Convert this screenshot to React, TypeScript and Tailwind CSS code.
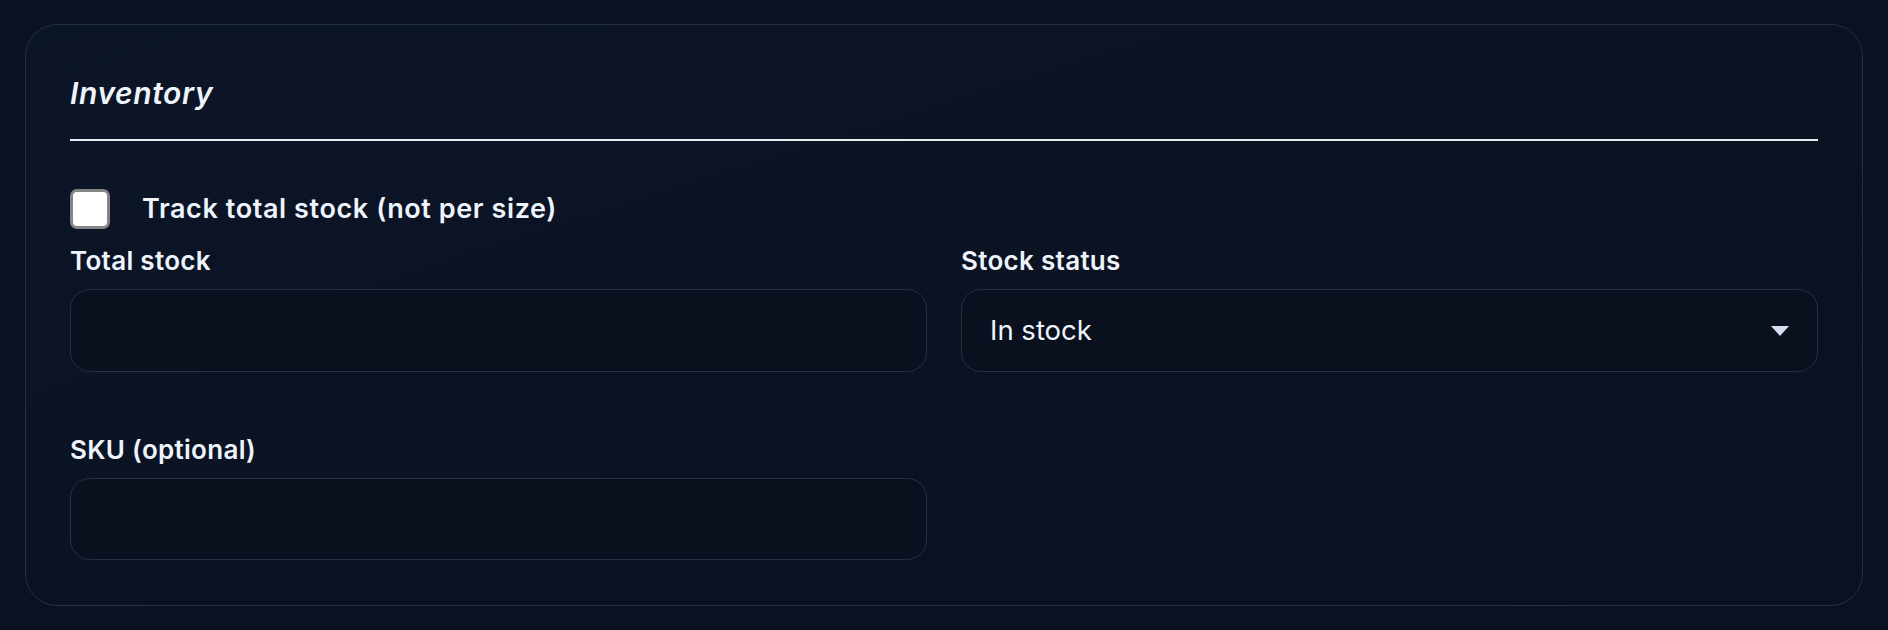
import React from 'react'

const font = { fontFamily: 'Inter, "Noto Sans", sans-serif' }

function Field({ label, children }: { label: string; children: React.ReactNode }) {
    return (
        <div className="flex flex-col">
            <label className="text-[26px] leading-[32px] font-semibold tracking-[0.3px] text-[#eef4fc] mb-[12px]">{label}</label>
            {children}
        </div>
    )
}

export default function App() {
    return (
        <div className="min-h-screen w-full bg-[#0a1120] px-[25px] pt-[24px] pb-[25px]" style={font}>
            <section className="rounded-[32px] border border-[#243044] bg-gradient-to-br from-[#0c1526] to-[#0a1120] px-[44px] pt-[50px] pb-[45px]">
                {/* Header */}
                <h2 className="text-[30px] leading-[36px] font-semibold italic tracking-[0.6px] text-[#eef4fc]">Inventory</h2>
                <div className="mt-[28px] h-[2px] bg-[#e8ecf2]" />

                {/* Checkbox */}
                <label className="mt-[48px] flex items-center gap-[32px]">
                    <span className="w-[40px] h-[40px] rounded-[7px] border-[3px] border-[#858585] bg-white shrink-0" />
                    <span className="text-[27px] leading-[32px] font-semibold tracking-[0.6px] text-[#eef4fc]">Track total stock (not per size)</span>
                </label>

                {/* Fields */}
                <div className="mt-[16px] grid grid-cols-2 gap-x-[34px] gap-y-[62px]">
                    <Field label="Total stock">
                        <input
                            type="text"
                            className="h-[83px] rounded-[20px] border border-[#243044] bg-[#0a101d] px-[28px] text-[28px] text-[#eef4fc] outline-none"
                        />
                    </Field>
                    <Field label="Stock status">
                        <div className="h-[83px] rounded-[20px] border border-[#243044] bg-[#0a101d] pl-[28px] pr-[28px] flex items-center justify-between">
                            <span className="text-[27.5px] text-[#eef4fc]">In stock</span>
                            <svg width="18" height="10" viewBox="0 0 18 10">
                                <path d="M0 0 L18 0 L9 10 Z" fill="#d3def2" />
                            </svg>
                        </div>
                    </Field>
                    <Field label="SKU (optional)">
                        <input
                            type="text"
                            className="h-[82px] rounded-[20px] border border-[#243044] bg-[#0a101d] px-[28px] text-[28px] text-[#eef4fc] outline-none"
                        />
                    </Field>
                </div>
            </section>
        </div>
    )
}
